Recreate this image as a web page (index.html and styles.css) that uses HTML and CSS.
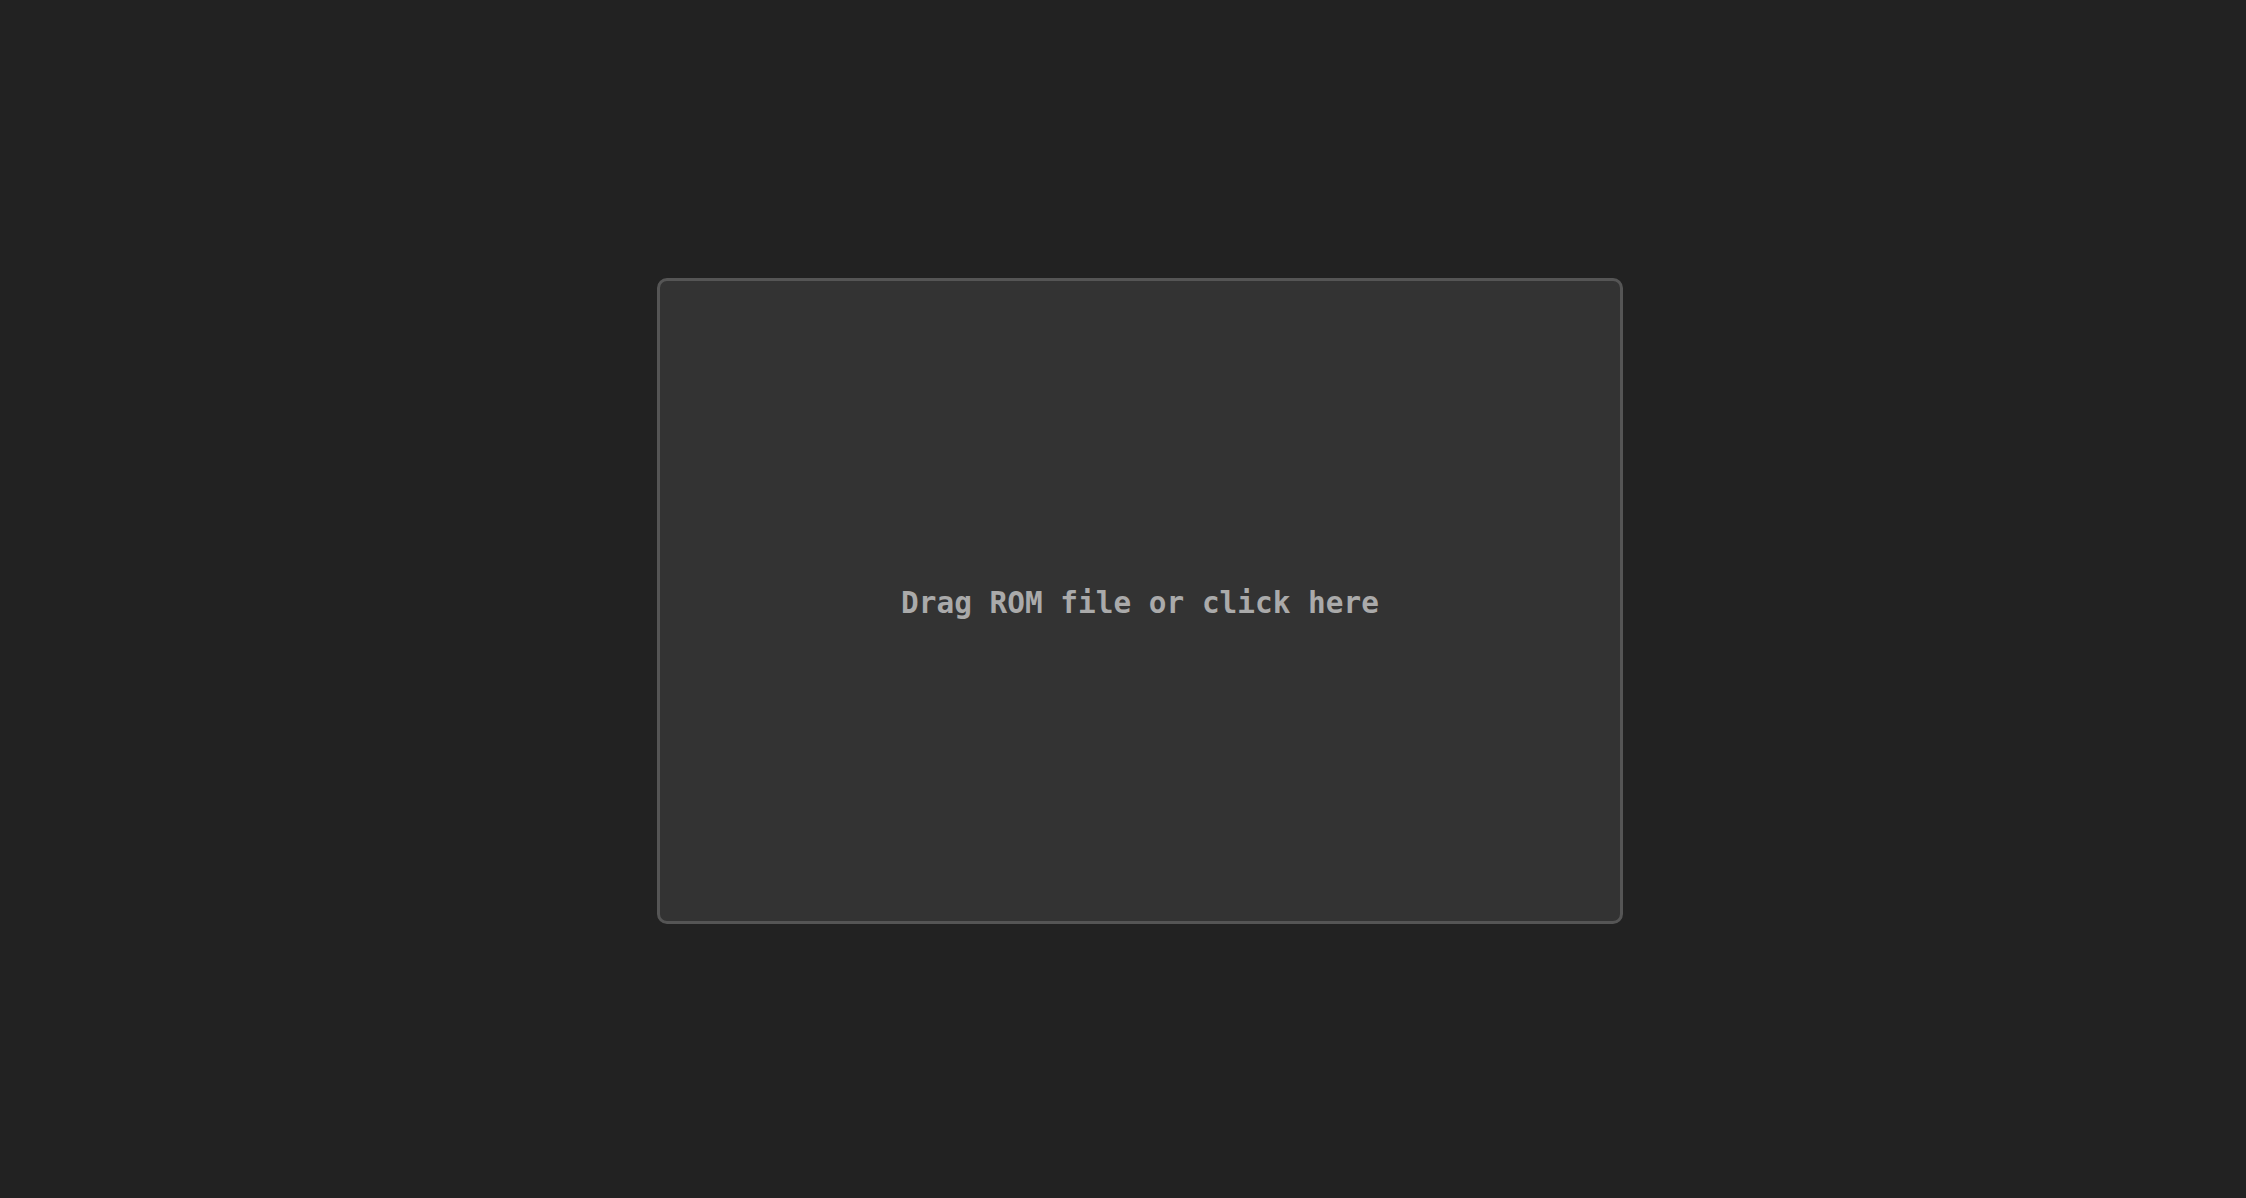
FILE: index.html
```html
<!DOCTYPE html>
<html>
<head>
<meta charset="utf-8">
<link rel="stylesheet" href="styles.css">
</head>
<body>
<main class="page">
  <div class="dropzone">
    <span class="label">Drag ROM file or click here</span>
  </div>
</main>
</body>
</html>
```
FILE: styles.css
```css
html, body {
  margin: 0;
  padding: 0;
  background: #222222;
}
.page {
  box-sizing: border-box;
  height: 1198px;
  padding: 4px 0 0 34px;
  display: flex;
  align-items: center;
  justify-content: center;
}
.dropzone {
  width: 960px;
  height: 640px;
  background: #333333;
  border: 3px solid #555555;
  border-radius: 10px;
  display: flex;
  align-items: center;
  justify-content: center;
  cursor: pointer;
}
.label {
  font-family: "DejaVu Sans Mono", "Liberation Mono", monospace;
  font-weight: bold;
  font-size: 29.4px;
  color: #aaaaaa;
  padding-top: 3px;
}
```
